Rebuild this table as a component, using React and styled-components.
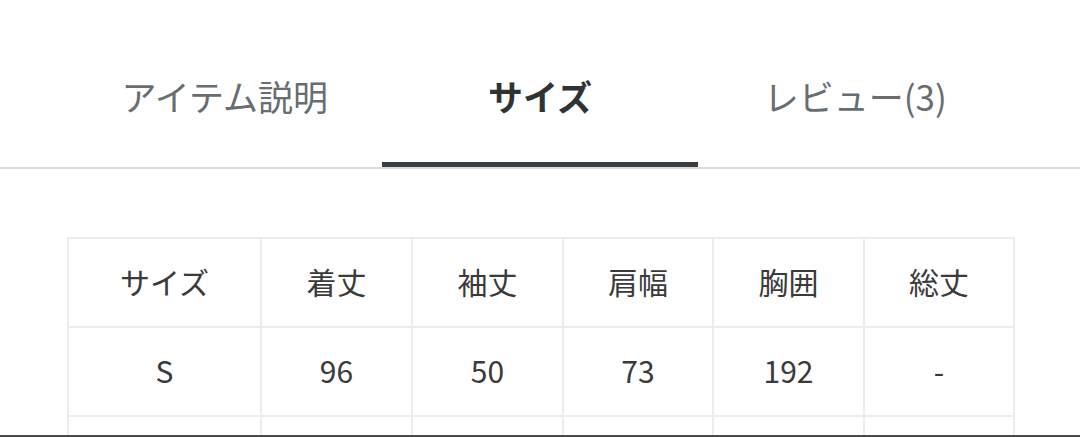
import React from "react";
import styled, { createGlobalStyle } from "styled-components";

const Global = createGlobalStyle`
  html, body { margin: 0; padding: 0; background: #fff; }
  body { font-family: "Noto Sans CJK JP", "Noto Sans", sans-serif; }
`;

const Page = styled.div`
  width: 1080px;
  height: 437px;
  overflow: hidden;
  background: #fff;
`;

const TabBar = styled.div`
  display: flex;
  padding: 0 67px;
  border-bottom: 2px solid #dcdcdc;
`;

const Tab = styled.div`
  position: relative;
  flex: 1;
  height: 167px;
  box-sizing: border-box;
  padding-top: 24px;
  display: flex;
  align-items: center;
  justify-content: center;
  font-size: 35px;
  font-weight: ${(p) => (p.$active ? 700 : 400)};
  color: ${(p) => (p.$active ? "#2f3336" : "#676d70")};
  &::after {
    content: "";
    display: ${(p) => (p.$active ? "block" : "none")};
    position: absolute;
    left: 0;
    right: 0;
    bottom: 0;
    height: 5px;
    background: #393e42;
  }
`;

const Table = styled.table`
  margin: 68px 0 0 67px;
  width: 946px;
  border-collapse: collapse;
  table-layout: fixed;
`;

const Cell = styled.td`
  height: 84px;
  border: 2px solid #ececec;
  text-align: center;
  vertical-align: middle;
  font-size: 30px;
  color: #3a3a3a;
  padding: 0 0 3px;
`;

const BottomEdge = styled.div`
  position: fixed;
  left: 0;
  right: 0;
  bottom: 0;
  height: 2px;
  background: #4a4a4a;
`;

const widths = [193, 151, 151, 150, 151, 150];
const header = ["サイズ", "着丈", "袖丈", "肩幅", "胸囲", "総丈"];
const rows = [
  ["S", "96", "50", "73", "192", "-"],
  ["", "", "", "", "", ""],
];

export default function App() {
  return (
    <Page>
      <Global />
      <TabBar>
        <Tab>アイテム説明</Tab>
        <Tab $active>サイズ</Tab>
        <Tab>レビュー(3)</Tab>
      </TabBar>
      <Table>
        <colgroup>
          {widths.map((w, i) => (
            <col key={i} style={{ width: w }} />
          ))}
        </colgroup>
        <tbody>
          <tr>
            {header.map((h) => (
              <Cell key={h}>{h}</Cell>
            ))}
          </tr>
          {rows.map((r, ri) => (
            <tr key={ri}>
              {r.map((c, ci) => (
                <Cell key={ci}>{c}</Cell>
              ))}
            </tr>
          ))}
        </tbody>
      </Table>
      <BottomEdge />
    </Page>
  );
}
